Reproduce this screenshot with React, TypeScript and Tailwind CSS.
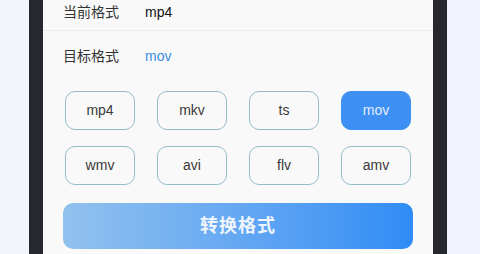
const formats = ["mp4", "mkv", "ts", "mov", "wmv", "avi", "flv", "amv"];

export default function App() {
  const selected = "mov";

  return (
    <div className="w-[480px] h-[254px] overflow-hidden flex bg-gradient-to-r from-[#f3f5fd] via-[#eceffb] to-[#f0f2fc] pl-[29px] font-['Liberation_Sans','Noto_Sans_CJK_SC',sans-serif]">
      <div className="w-[418px] h-full flex bg-[#26282d] px-[14px]">
        <div className="flex-1 h-full bg-[#f9f9f9] flex flex-col">
          <div className="h-[31px] flex items-start pt-[2px] mx-[0px] pl-[20px] border-b border-[#ececec] text-[14px] leading-[20px]">
            <span className="w-[82px] text-[#333]">当前格式</span>
            <span className="text-[#111] font-medium">mp4</span>
          </div>
          <div className="h-[50px] flex items-center pl-[20px] text-[14px] leading-[20px]">
            <span className="w-[82px] text-[#333]">目标格式</span>
            <span className="text-[#3a8ee0]">mov</span>
          </div>

          <div className="mt-[10px] px-[22px] grid grid-cols-[70px_70px_70px_70px] justify-between gap-y-[16px]">
            {formats.map(f => (
              <div
                key={f}
                className={
                  f === selected
                    ? "h-[39px] rounded-[10px] bg-[#3d8ff4] border-[1.5px] border-[#3d8ff4] flex items-center justify-center text-[14px] text-[#e3edfc]"
                    : "h-[39px] rounded-[10px] border-[1.5px] border-[#93bccb] flex items-center justify-center text-[14px] text-[#3a3a3a]"
                }
              >
                {f}
              </div>
            ))}
          </div>

          <button className="mt-[18px] mx-[20px] h-[46px] rounded-[10px] bg-gradient-to-r from-[#92c1ee] to-[#2f8cf5] text-[#eef5fe] text-[18px] font-bold tracking-[1px]">
            转换格式
          </button>
        </div>
      </div>
    </div>
  );
}
